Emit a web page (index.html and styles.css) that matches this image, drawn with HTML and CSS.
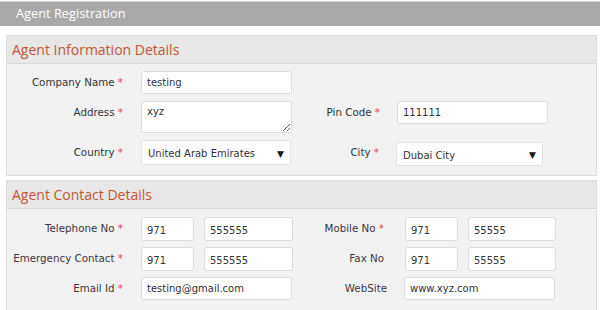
FILE: index.html
```html
<!DOCTYPE html>
<html>
<head>
<meta charset="utf-8">
<link rel="stylesheet" href="styles.css">
</head>
<body>
<div class="topbar">Agent Registration</div>
<div class="page">
  <section class="panel panel-info">
    <div class="panel-head">Agent Information Details</div>
    <div class="panel-body">
      <div class="row r-company">
        <label class="lbl">Company Name <span class="req">*</span></label>
        <input class="ctl w150" type="text" value="testing">
      </div>
      <div class="row r-address">
        <label class="lbl">Address <span class="req">*</span></label>
        <textarea class="ctl w150 ta">xyz</textarea>
        <label class="lbl lbl-r">Pin Code <span class="req">*</span></label>
        <input class="ctl w150" type="text" value="111111">
      </div>
      <div class="row r-country">
        <label class="lbl">Country <span class="req">*</span></label>
        <div class="ctl sel w149"><span>United Arab Emirates</span><span class="arrow">&#9660;</span></div>
        <label class="lbl lbl-r">City <span class="req">*</span></label>
        <div class="ctl sel w146 city"><span>Dubai City</span><span class="arrow">&#9660;</span></div>
      </div>
    </div>
  </section>
  <section class="panel panel-contact">
    <div class="panel-head">Agent Contact Details</div>
    <div class="panel-body">
      <div class="row">
        <label class="lbl">Telephone No <span class="req">*</span></label>
        <div class="pair">
          <input class="ctl code" type="text" value="971">
          <input class="ctl num" type="text" value="555555">
        </div>
        <label class="lbl lbl-r2">Mobile No <span class="req">*</span></label>
        <div class="pair pair-r">
          <input class="ctl code" type="text" value="971">
          <input class="ctl num" type="text" value="55555">
        </div>
      </div>
      <div class="row">
        <label class="lbl">Emergency Contact <span class="req">*</span></label>
        <div class="pair">
          <input class="ctl code" type="text" value="971">
          <input class="ctl num" type="text" value="555555">
        </div>
        <label class="lbl lbl-r2">Fax No</label>
        <div class="pair pair-r">
          <input class="ctl code" type="text" value="971">
          <input class="ctl num" type="text" value="55555">
        </div>
      </div>
      <div class="row">
        <label class="lbl">Email Id <span class="req">*</span></label>
        <input class="ctl w150" type="text" value="testing@gmail.com">
        <label class="lbl lbl-r2 web">WebSite</label>
        <input class="ctl w150" type="text" value="www.xyz.com">
      </div>
    </div>
  </section>
</div>
</body>
</html>
```
FILE: styles.css
```css
* { box-sizing: border-box; }
html, body { margin: 0; padding: 0; background: #fff; }
body {
  width: 600px;
  height: 310px;
  overflow: hidden;
  font-family: "DejaVu Sans", Verdana, sans-serif;
  font-size: 10.3px;
  color: #333;
}
.topbar {
  margin-top: 1px;
  height: 25px;
  background: #a9a9a9;
  border-top: 1px solid #d4d4d4;
  color: #fff;
  font-family: "Open Sans", sans-serif;
  font-size: 12.8px;
  line-height: 23px;
  padding-left: 16px;
}
.page {
  padding: 9px 3px 0 6px;
}
.panel {
  background: #f2f2f2;
  border: 1px solid #dedede;
  margin-bottom: 4px;
}
.panel-head {
  height: 28px;
  background: #e7e7e7;
  border-bottom: 1px solid #dadada;
  color: #c4562e;
  font-family: "Open Sans", sans-serif;
  font-size: 14px;
  line-height: 27px;
  padding-left: 5px;
}
.panel-info .panel-body { padding: 7px 0 7px 0; }
.panel-contact .panel-body { padding: 8px 0 8px 0; }
.row {
  display: flex;
  align-items: flex-start;
}
.r-company { height: 30px; }
.r-address { height: 40px; }
.r-country { height: 27px; }
.panel-contact .row { height: 30px; }
.lbl {
  width: 116px;
  text-align: right;
  padding-top: 5px;
  margin-right: 18px;
  white-space: nowrap;
  color: #333;
}
.panel-contact .lbl { color: #3d343d; }
.lbl-r { width: 88px; margin-right: 17px; }
.lbl-r2 { width: 91px; margin-right: 21px; }
.lbl-r2.web { width: 95px; margin-right: 17px; }
.req { color: #e04848; }
.ctl {
  display: block;
  height: 23px;
  background: #fff;
  border: 1px solid #dcdcdc;
  border-radius: 3px;
  font-family: "DejaVu Sans", Verdana, sans-serif;
  font-size: 10px;
  color: #333;
  padding: 0 5px;
  margin: 0;
  outline: none;
}
.w150 { width: 151px; }
.w149 { width: 150px; }
.w146 { width: 147px; }
.ta {
  height: 32px;
  resize: vertical;
  padding: 3px 5px;
  line-height: 13px;
}
.sel {
  height: 25px;
  margin-top: -1px;
  display: flex;
  align-items: center;
  justify-content: space-between;
  padding: 2px 6px 0 6px;
  border-color: #e2e2e2;
}
.city { margin-top: 1px; height: 24px; }
.arrow { font-size: 9px; color: #111; }
.pair { display: flex; gap: 10px; }
.code { width: 53px; height: 24px; padding-top: 2px; }
.num { width: 89px; height: 24px; padding-top: 2px; }
.pair-r .num { width: 88px; }
```
